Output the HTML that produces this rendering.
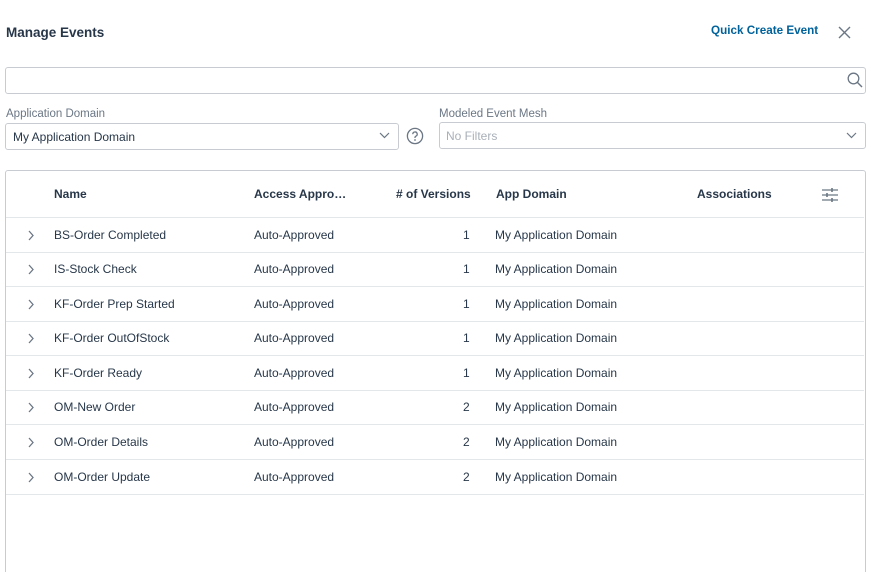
<!DOCTYPE html>
<html style="width:874px;height:572px;overflow:hidden"><head><meta charset="utf-8"><style>
*{box-sizing:border-box;margin:0;padding:0}
body{width:874px;height:572px;background:#fff;font-family:"Liberation Sans",sans-serif;color:#273749;position:relative;overflow:hidden;font-size:12px}
.abs{position:absolute}
.box{position:absolute;border:1px solid #c8ccd2;border-radius:3px;background:#fff}
.lbl{position:absolute;font-size:11.5px;color:#6b7785}
.row{position:absolute;left:6px;width:858px;height:35px;border-bottom:1px solid #e4e7ea}
.row span{position:absolute;top:10px;font-size:12px;color:#273749;white-space:nowrap}
.hd{position:absolute;top:187px;font-weight:bold;font-size:12px;color:#273749}
</style></head><body>
<div class="abs" style="left:6px;top:25px;font-size:13.5px;font-weight:bold">Manage Events</div>
<div class="abs" style="left:711px;top:24px;font-size:11.7px;font-weight:bold;color:#00629b">Quick Create Event</div>
<svg class="abs" style="left:838px;top:26px" width="13" height="13" viewBox="0 0 13 13"><path d="M1 1L12 12M12 1L1 12" stroke="#6b7785" stroke-width="1.4"/></svg>
<div class="box" style="left:5px;top:67px;width:861px;height:27px"></div>
<svg class="abs" style="left:847px;top:72px" width="16" height="16" viewBox="0 0 16 16"><circle cx="6.5" cy="6.5" r="5.3" fill="none" stroke="#6b7785" stroke-width="1.3"/><path d="M10.5 10.5L15 15" stroke="#6b7785" stroke-width="1.4"/></svg>
<div class="lbl" style="left:6px;top:108px">Application Domain</div>
<div class="box" style="left:5px;top:123px;width:394px;height:27px"><span class="abs" style="left:7px;top:6px;font-size:12px">My Application Domain</span></div>
<svg class="abs" style="left:379px;top:132px" width="11" height="7" viewBox="0 0 11 7"><path d="M1 1L5.5 5.5L10 1" fill="none" stroke="#6b7785" stroke-width="1.2"/></svg>
<svg class="abs" style="left:406px;top:127px" width="18" height="18" viewBox="0 0 18 18"><circle cx="9" cy="9" r="7.6" fill="none" stroke="#6b7785" stroke-width="1.3"/><path d="M6.8 7.2a2.2 2.2 0 1 1 3 2c-.6.3-.8.7-.8 1.3v.5" fill="none" stroke="#6b7785" stroke-width="1.3"/><circle cx="9" cy="13" r=".9" fill="#6b7785"/></svg>
<div class="lbl" style="left:439px;top:108px">Modeled Event Mesh</div>
<div class="box" style="left:439px;top:122px;width:427px;height:27px"><span class="abs" style="left:6px;top:6px;font-size:12px;color:#a9b0b8">No Filters</span></div>
<svg class="abs" style="left:846px;top:132px" width="11" height="7" viewBox="0 0 11 7"><path d="M1 1L5.5 5.5L10 1" fill="none" stroke="#6b7785" stroke-width="1.2"/></svg>
<div class="box" style="left:5px;top:170px;width:861px;height:410px"></div>
<div class="abs" style="left:6px;top:217px;width:858px;border-top:1px solid #e4e7ea"></div>
<div class="hd" style="left:54px">Name</div>
<div class="hd" style="left:254px">Access Appro…</div>
<div class="hd" style="left:396px">#&nbsp;of Versions</div>
<div class="hd" style="left:496px">App Domain</div>
<div class="hd" style="left:697px">Associations</div>
<svg class="abs" style="left:822px;top:187px" width="16" height="16" viewBox="0 0 16 16" stroke="#6b7785" stroke-width="1.3"><path d="M0 3h16M0 8h16M0 13h16"/><path d="M10 1v4M5 6v4M10 11v4" stroke-width="1.6"/></svg>
<div class="row" style="top:218px"><span style="left:48px">BS-Order Completed</span><span style="left:248px">Auto-Approved</span><span style="left:457px">1</span><span style="left:489px">My Application Domain</span></div>
<div class="row" style="top:252px"><span style="left:48px">IS-Stock Check</span><span style="left:248px">Auto-Approved</span><span style="left:457px">1</span><span style="left:489px">My Application Domain</span></div>
<div class="row" style="top:287px"><span style="left:48px">KF-Order Prep Started</span><span style="left:248px">Auto-Approved</span><span style="left:457px">1</span><span style="left:489px">My Application Domain</span></div>
<div class="row" style="top:321px"><span style="left:48px">KF-Order OutOfStock</span><span style="left:248px">Auto-Approved</span><span style="left:457px">1</span><span style="left:489px">My Application Domain</span></div>
<div class="row" style="top:356px"><span style="left:48px">KF-Order Ready</span><span style="left:248px">Auto-Approved</span><span style="left:457px">1</span><span style="left:489px">My Application Domain</span></div>
<div class="row" style="top:390px"><span style="left:48px">OM-New Order</span><span style="left:248px">Auto-Approved</span><span style="left:457px">2</span><span style="left:489px">My Application Domain</span></div>
<div class="row" style="top:425px"><span style="left:48px">OM-Order Details</span><span style="left:248px">Auto-Approved</span><span style="left:457px">2</span><span style="left:489px">My Application Domain</span></div>
<div class="row" style="top:460px"><span style="left:48px">OM-Order Update</span><span style="left:248px">Auto-Approved</span><span style="left:457px">2</span><span style="left:489px">My Application Domain</span></div>
<svg class="abs" style="left:27px;top:230px" width="8" height="260" viewBox="0 0 8 260" fill="none" stroke="#6b7785" stroke-width="1.3">
<path d="M2 1l4 4.5-4 4.5"/><path d="M2 35l4 4.5-4 4.5"/><path d="M2 70l4 4.5-4 4.5"/><path d="M2 104l4 4.5-4 4.5"/><path d="M2 139l4 4.5-4 4.5"/><path d="M2 173l4 4.5-4 4.5"/><path d="M2 208l4 4.5-4 4.5"/><path d="M2 243l4 4.5-4 4.5"/>
</svg>
</body></html>
